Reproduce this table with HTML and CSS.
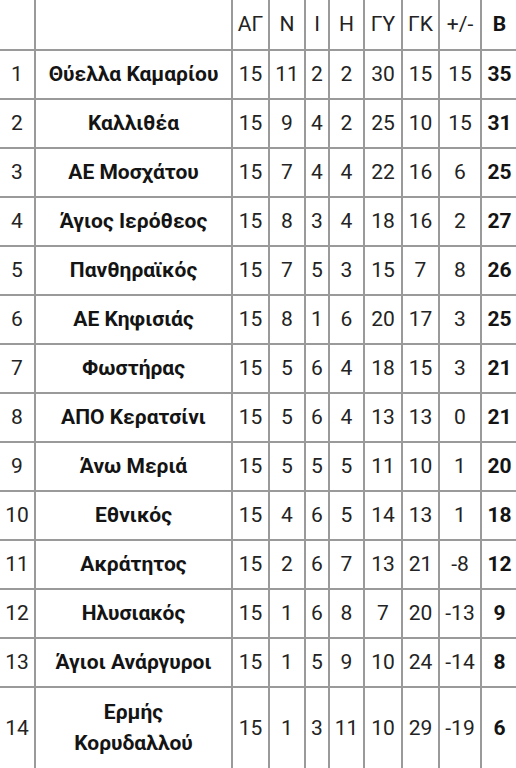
FILE: index.html
```html
<!DOCTYPE html>
<html lang="el">
<head>
<meta charset="utf-8">
<link rel="stylesheet" href="styles.css">
</head>
<body>
<div class="frame">
<table class="standings">
<colgroup>
<col class="c-pos"><col class="c-team"><col class="c-ag"><col class="c-n"><col class="c-i"><col class="c-h"><col class="c-gy"><col class="c-gk"><col class="c-diff"><col class="c-pts">
</colgroup>
<thead>
<tr class="head"><th></th><th></th><th>ΑΓ</th><th>Ν</th><th>Ι</th><th>Η</th><th>ΓΥ</th><th>ΓΚ</th><th>+/-</th><th class="pts">Β</th></tr>
</thead>
<tbody>
<tr><td>1</td><td class="team">Θύελλα Καμαρίου</td><td>15</td><td>11</td><td>2</td><td>2</td><td>30</td><td>15</td><td>15</td><td class="pts">35</td></tr>
<tr><td>2</td><td class="team">Καλλιθέα</td><td>15</td><td>9</td><td>4</td><td>2</td><td>25</td><td>10</td><td>15</td><td class="pts">31</td></tr>
<tr><td>3</td><td class="team">ΑΕ Μοσχάτου</td><td>15</td><td>7</td><td>4</td><td>4</td><td>22</td><td>16</td><td>6</td><td class="pts">25</td></tr>
<tr><td>4</td><td class="team">Άγιος Ιερόθεος</td><td>15</td><td>8</td><td>3</td><td>4</td><td>18</td><td>16</td><td>2</td><td class="pts">27</td></tr>
<tr><td>5</td><td class="team">Πανθηραϊκός</td><td>15</td><td>7</td><td>5</td><td>3</td><td>15</td><td>7</td><td>8</td><td class="pts">26</td></tr>
<tr><td>6</td><td class="team">ΑΕ Κηφισιάς</td><td>15</td><td>8</td><td>1</td><td>6</td><td>20</td><td>17</td><td>3</td><td class="pts">25</td></tr>
<tr><td>7</td><td class="team">Φωστήρας</td><td>15</td><td>5</td><td>6</td><td>4</td><td>18</td><td>15</td><td>3</td><td class="pts">21</td></tr>
<tr><td>8</td><td class="team">ΑΠΟ Κερατσίνι</td><td>15</td><td>5</td><td>6</td><td>4</td><td>13</td><td>13</td><td>0</td><td class="pts">21</td></tr>
<tr><td>9</td><td class="team">Άνω Μεριά</td><td>15</td><td>5</td><td>5</td><td>5</td><td>11</td><td>10</td><td>1</td><td class="pts">20</td></tr>
<tr><td>10</td><td class="team">Εθνικός</td><td>15</td><td>4</td><td>6</td><td>5</td><td>14</td><td>13</td><td>1</td><td class="pts">18</td></tr>
<tr><td>11</td><td class="team">Ακράτητος</td><td>15</td><td>2</td><td>6</td><td>7</td><td>13</td><td>21</td><td>-8</td><td class="pts">12</td></tr>
<tr><td>12</td><td class="team">Ηλυσιακός</td><td>15</td><td>1</td><td>6</td><td>8</td><td>7</td><td>20</td><td>-13</td><td class="pts">9</td></tr>
<tr><td>13</td><td class="team">Άγιοι Ανάργυροι</td><td>15</td><td>1</td><td>5</td><td>9</td><td>10</td><td>24</td><td>-14</td><td class="pts">8</td></tr>
<tr class="tall"><td>14</td><td class="team">Ερμής<br>Κορυδαλλού</td><td>15</td><td>1</td><td>3</td><td>11</td><td>10</td><td>29</td><td>-19</td><td class="pts">6</td></tr>
</tbody>
</table>
</div>
</body>
</html>
```
FILE: styles.css
```css
html, body {
  margin: 0;
  padding: 0;
  background: #ffffff;
}
.frame {
  width: 516px;
  height: 768px;
  overflow: hidden;
}
.standings {
  border-collapse: collapse;
  table-layout: fixed;
  width: 517px;
  margin: 0;
  font-family: Roboto, "Noto Sans", sans-serif;
  font-size: 21px;
  color: #232323;
}
.standings th,
.standings td {
  border: 2px solid #9a9a9a;
  padding: 0;
  text-align: center;
  vertical-align: middle;
  line-height: 31px;
  font-weight: 400;
}
.standings thead th {
  border-top: hidden;
}
.standings th:first-child,
.standings td:first-child {
  border-left: hidden;
}
.standings th:last-child,
.standings td:last-child {
  border-right: hidden;
}
.standings .head {
  height: 50px;
}
.standings tbody tr {
  height: 49px;
}
.standings tbody tr.tall {
  height: 82px;
}
.standings .team {
  font-weight: 700;
  color: #141414;
}
.standings .pts {
  font-weight: 700;
  color: #141414;
}
.c-pos { width: 35px; }
.c-team { width: 197px; }
.c-ag { width: 37px; }
.c-n { width: 36px; }
.c-i { width: 24px; }
.c-h { width: 35px; }
.c-gy { width: 38px; }
.c-gk { width: 37px; }
.c-diff { width: 42px; }
.c-pts { width: 36px; }
```
